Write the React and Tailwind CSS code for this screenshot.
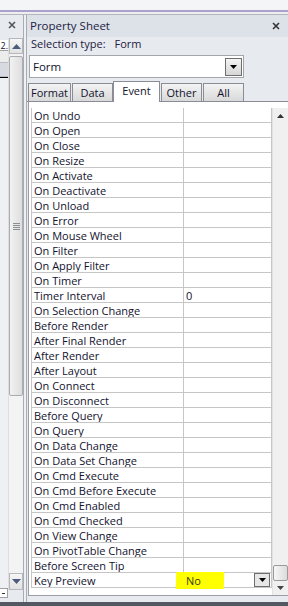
import React from "react";

const rows = [
  ["On Undo", ""],
  ["On Open", ""],
  ["On Close", ""],
  ["On Resize", ""],
  ["On Activate", ""],
  ["On Deactivate", ""],
  ["On Unload", ""],
  ["On Error", ""],
  ["On Mouse Wheel", ""],
  ["On Filter", ""],
  ["On Apply Filter", ""],
  ["On Timer", ""],
  ["Timer Interval", "0"],
  ["On Selection Change", ""],
  ["Before Render", ""],
  ["After Final Render", ""],
  ["After Render", ""],
  ["After Layout", ""],
  ["On Connect", ""],
  ["On Disconnect", ""],
  ["Before Query", ""],
  ["On Query", ""],
  ["On Data Change", ""],
  ["On Data Set Change", ""],
  ["On Cmd Execute", ""],
  ["On Cmd Before Execute", ""],
  ["On Cmd Enabled", ""],
  ["On Cmd Checked", ""],
  ["On View Change", ""],
  ["On PivotTable Change", ""],
  ["Before Screen Tip", ""],
];

function Tri({ down = true, w = 7, h = 4, color = "#000" }) {
  return (
    <svg width={w} height={h} viewBox={`0 0 ${w} ${h}`}>
      {down ? (
        <polygon points={`0,0 ${w},0 ${w / 2},${h}`} fill={color} />
      ) : (
        <polygon points={`0,${h} ${w},${h} ${w / 2},0`} fill={color} />
      )}
    </svg>
  );
}

function CloseX({ color = "#444" }) {
  return (
    <svg width="8" height="8" viewBox="0 0 8 8">
      <path d="M1 1 L7 7 M7 1 L1 7" stroke={color} strokeWidth="1.6" />
    </svg>
  );
}

function DropBtn({ className = "" }) {
  return (
    <div
      className={
        "flex items-center justify-center border border-[#6e6e6e] bg-gradient-to-b from-[#f4f4f4] to-[#d6d6d6] " +
        className
      }
    >
      <Tri w={7} h={4} />
    </div>
  );
}

const cell = "pt-px leading-[13px] h-[14px]";

export default function App() {
  return (
    <div className="w-[288px] h-[606px] overflow-hidden bg-[#e7eaef] flex flex-col font-['Open_Sans',sans-serif] text-[#12122e]">
      {/* top strip */}
      <div className="h-[10px] bg-[#f4f5f7]" />
      <div className="h-[2px] bg-[#a9a3cc]" />
      <div className="h-[2px] bg-[#eeeef2]" />
      <div className="h-px bg-[#b4b6bd]" />

      <div className="flex flex-1 min-h-0">
        {/* left panel */}
        <div className="w-[23px] flex flex-col">
          <div className="h-[23px] flex justify-center pt-[6px] pl-[1px]">
            <CloseX color="#555" />
          </div>
          <div className="flex flex-1 min-h-0">
            {/* strip */}
            <div className="w-[8px] flex flex-col">
              <div className="h-[2px]" />
              <div className="h-[11px] bg-white border-b border-[#a0a0a0] overflow-hidden flex justify-end text-[9px] leading-[11px] whitespace-nowrap">
                2.
              </div>
              <div className="h-[11px] bg-[#ececec]" />
              <div className="h-[15px] bg-[#d7dae0] border-y border-[#b9bcc3]" />
              <div className="h-px bg-black" />
              <div className="flex-1 bg-[#eef0f3]" />
              <div className="h-[10px] bg-white border border-l-0 border-[#a0a0a0] flex items-center pl-[2px]">
                <div className="w-[3px] h-px bg-[#333]" />
              </div>
              <div className="h-[4px]" />
            </div>
            {/* scrollbar */}
            <div className="w-[15px] flex flex-col h-[552px] bg-[#f3f3f3] border-l border-[#dedede]">
              <div className="h-[16px] border border-[#b6b8bd] bg-gradient-to-b from-[#f6f6f6] to-[#e2e2e2] flex items-center justify-center">
                <Tri down={false} w={9} h={5} color="#4d5b7c" />
              </div>
              <div className="h-[2px]" />
              <div className="h-[340px] rounded-[2px] border border-[#a9abb0] bg-gradient-to-r from-[#f2f2f2] to-[#dedede] flex items-center justify-center">
                <div className="flex flex-col gap-[1px]">
                  <div className="w-[7px] h-px bg-[#8a8d94]" />
                  <div className="w-[7px] h-px bg-[#8a8d94]" />
                  <div className="w-[7px] h-px bg-[#8a8d94]" />
                  <div className="w-[7px] h-px bg-[#8a8d94]" />
                </div>
              </div>
              <div className="flex-1" />
              <div className="h-[17px] border border-[#b6b8bd] bg-gradient-to-b from-[#f6f6f6] to-[#e2e2e2] flex items-center justify-center">
                <Tri w={9} h={5} color="#4d5b7c" />
              </div>
            </div>
          </div>
        </div>

        {/* splitter */}
        <div className="w-[4px] border-x border-[#a8acb4] bg-[#eef0f3]" />

        {/* right panel */}
        <div className="flex-1 flex flex-col min-w-0">
          <div className="h-[22px] bg-[#dde1e8] flex items-center justify-between pl-[3px] pr-[8px]">
            <span className="text-[11.5px] leading-[14px] text-[#1e2444]">Property Sheet</span>
            <CloseX color="#333" />
          </div>
          <div className="h-[14px] pl-[4px] text-[11px] leading-[14px] text-[#1e2040] whitespace-nowrap">
            Selection type:<span className="inline-block w-[9px]" />Form
          </div>
          <div className="h-[4px]" />
          <div className="ml-[2px] w-[215px] h-[23px] bg-white border border-[#a3a6ad] flex items-center justify-between pl-[3px] pr-[1px]">
            <span className="text-[11.5px] leading-[14px]">Form</span>
            <DropBtn className="w-[17px] h-[18px]" />
          </div>
          <div className="h-[3px]" />
          {/* tabs */}
          <div className="flex items-end h-[21px] border-b border-[#898c95] pl-[1px] text-[11px] leading-[14px]">
            <div className="w-[43px] h-[18px] border border-b-0 border-[#8a8d96] bg-gradient-to-b from-[#f3f3f3] to-[#d9d9d9] flex items-center justify-center">
              Format
            </div>
            <div className="w-[41px] h-[18px] ml-[1px] border border-b-0 border-[#8a8d96] bg-gradient-to-b from-[#f3f3f3] to-[#d9d9d9] flex items-center justify-center">
              Data
            </div>
            <div className="w-[47px] h-[21px] -mb-px relative border border-b-0 border-[#8a8d96] bg-white flex items-start pt-[2px] justify-center">
              Event
            </div>
            <div className="w-[41px] h-[18px] ml-[1px] border border-b-0 border-[#8a8d96] bg-gradient-to-b from-[#f3f3f3] to-[#d9d9d9] flex items-center justify-center">
              Other
            </div>
            <div className="w-[41px] h-[18px] ml-[1px] border border-b-0 border-[#8a8d96] bg-gradient-to-b from-[#f3f3f3] to-[#d9d9d9] flex items-center justify-center">
              All
            </div>
          </div>
          {/* content */}
          <div className="ml-px h-[494px] bg-white border-l border-b border-[#9a9da5] pl-[2px] pt-[6px] flex">
            <div className="w-[241px] flex flex-col text-[11px]">
              {rows.map(([name, val]) => (
                <div key={name} className="flex h-[15px] border-b border-[#c6c6c6]">
                  <div className={"w-[153px] border-x border-[#c6c6c6] pl-[2px] whitespace-nowrap overflow-hidden " + cell}>
                    {name}
                  </div>
                  <div className={"w-[88px] border-r border-[#c6c6c6] pl-[2px] " + cell}>{val}</div>
                </div>
              ))}
              <div className="flex h-[15px] border-b border-[#c6c6c6] relative">
                <div className="absolute left-[145px] top-[-1px] w-[48px] h-[17px] bg-[#ffff00] rounded-[1px] -skew-x-2" />
                <div className={"w-[153px] border-x border-[#c6c6c6] pl-[2px] whitespace-nowrap overflow-hidden " + cell}>
                  Key Preview
                </div>
                <div className="w-[88px] h-[14px] border-r border-[#c6c6c6] pl-[2px] flex items-start justify-between relative">
                  <span className="text-[#3a3a10] pt-px leading-[13px]">No</span>
                  <DropBtn className="w-[16px] h-[14px] bg-none bg-[#e6e6e6] mr-px" />
                </div>
              </div>
            </div>
            <div className="w-[16px] flex flex-col bg-[#f0f0f0] border-l border-[#e2e2e2]">
              <div className="h-[15px] flex items-center justify-center">
                <Tri down={false} w={7} h={4} color="#333" />
              </div>
              <div className="flex-1" />
              <div className="h-[16px] rounded-[2px] border border-[#9a9a9a] bg-gradient-to-r from-[#f6f6f6] to-[#dcdcdc]" />
              <div className="h-[14px] flex items-center justify-center">
                <Tri w={7} h={4} color="#444" />
              </div>
            </div>
          </div>
        </div>
      </div>
      <div className="h-[4px] bg-[#535862]" />
    </div>
  );
}
